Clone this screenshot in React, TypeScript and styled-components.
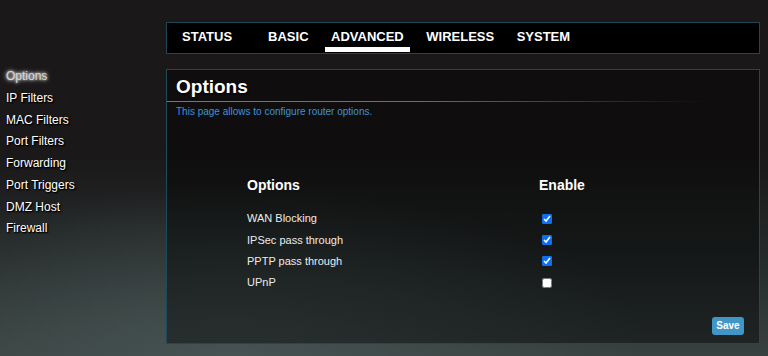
import React from "react";
import styled, { createGlobalStyle } from "styled-components";

const GlobalStyle = createGlobalStyle`
  html, body {
    margin: 0;
    padding: 0;
    min-height: 100%;
  }
  body {
    font-family: "Liberation Sans", Arial, sans-serif;
    color: #fff;
    background-color: #1a1819;
    background-image:
      radial-gradient(ellipse 420px 170px at 230px 356px, rgba(72, 86, 85, 0.85) 0%, rgba(72, 86, 85, 0) 100%),
      linear-gradient(to bottom, #1a1819 0px, #1a1819 150px, #262b2b 260px, #384140 356px);
    background-repeat: no-repeat;
    min-height: 356px;
  }
`;

const Page = styled.div`
  display: grid;
  grid-template-columns: 166px 594px;
  min-height: 356px;
  box-sizing: border-box;
`;

const Sidebar = styled.nav`
  display: flex;
  flex-direction: column;
  padding: 66px 0 0 6px;
`;

const SideLink = styled.div<{ $active?: boolean }>`
  font-size: 12px;
  line-height: 21.75px;
  color: ${(p) => (p.$active ? "#d6d6d6" : "#ffffff")};
  text-shadow: ${(p) =>
    p.$active ? "0 0 3px #fff, 0 0 5px rgba(255,255,255,0.8)" : "1px 1px 2px #000, 1px 1px 1px #000"};
  white-space: nowrap;
`;

const Main = styled.main`
  display: flex;
  flex-direction: column;
  padding-top: 22px;
`;

const TabBar = styled.div`
  display: flex;
  gap: 9.5px;
  height: 32px;
  box-sizing: border-box;
  background: #000;
  border: 1px solid #1c4757;
  padding-left: 8.5px;
`;

const Tab = styled.div<{ $active?: boolean; $spaced?: boolean }>`
  font-size: 13px;
  font-weight: bold;
  line-height: 21px;
  padding: 3px 6.5px 0;
  height: 29px;
  box-sizing: border-box;
  border-bottom: 5px solid ${(p) => (p.$active ? "#ffffff" : "transparent")};
  margin-right: ${(p) => (p.$spaced ? "13.5px" : "0")};
  color: #fff;
  text-shadow: 1px 1px 1px rgba(0, 0, 0, 0.8);
`;

const Panel = styled.section`
  margin-top: 15px;
  height: 275px;
  box-sizing: border-box;
  border: 1px solid #1d4a5a;
  background: rgba(0, 0, 0, 0.42);
  display: flex;
  flex-direction: column;
`;

const TitleBar = styled.h1`
  margin: 0 52px 0 0;
  padding: 5px 0 2px 9px;
  font-size: 19px;
  line-height: 24px;
  font-weight: bold;
  color: #fff;
  text-shadow: 1px 1px 2px #000;
  border-bottom: 1px solid;
  border-image: linear-gradient(to right, #3d88aa 0%, #3a80a0 45%, rgba(40, 80, 100, 0) 100%) 1;
`;

const Description = styled.p`
  margin: 4px 0 0;
  padding-left: 9px;
  font-size: 10px;
  line-height: 12px;
  color: #3f93d6;
`;

const OptionsGrid = styled.div`
  display: grid;
  grid-template-columns: 292px 120px;
  margin: 59px 0 0 80px;
`;

const HeaderCell = styled.div`
  font-size: 14px;
  font-weight: bold;
  line-height: 16px;
  margin-bottom: 15.3px;
  color: #fff;
`;

const LabelCell = styled.div`
  font-size: 11px;
  line-height: 21.25px;
  height: 21.25px;
  color: #ececec;
  white-space: nowrap;
`;

const CheckCell = styled.div`
  height: 21.25px;
  display: flex;
  align-items: center;
`;

const Check = styled.input.attrs({ type: "checkbox" })`
  width: 10px;
  height: 10px;
  margin: 0 0 0 2.5px;
  accent-color: #0b6ff0;
`;

const Footer = styled.div`
  margin-top: auto;
  display: flex;
  justify-content: flex-end;
  padding: 0 15px 8px 0;
`;

const SaveButton = styled.button`
  width: 32px;
  height: 18px;
  padding: 0;
  border: none;
  border-radius: 3px;
  background: #4096c7;
  color: #fff;
  font-family: "Liberation Sans", Arial, sans-serif;
  font-size: 10px;
  font-weight: bold;
  line-height: 18px;
  cursor: pointer;
`;

const sideItems = [
  "Options",
  "IP Filters",
  "MAC Filters",
  "Port Filters",
  "Forwarding",
  "Port Triggers",
  "DMZ Host",
  "Firewall",
];

const tabs = ["STATUS", "BASIC", "ADVANCED", "WIRELESS", "SYSTEM"];

const options: { label: string; enabled: boolean }[] = [
  { label: "WAN Blocking", enabled: true },
  { label: "IPSec pass through", enabled: true },
  { label: "PPTP pass through", enabled: true },
  { label: "UPnP", enabled: false },
];

export default function App() {
  return (
    <>
      <GlobalStyle />
      <Page>
        <Sidebar>
          {sideItems.map((item, i) => (
            <SideLink key={item} $active={i === 0}>
              {item}
            </SideLink>
          ))}
        </Sidebar>
        <Main>
          <TabBar>
            {tabs.map((t, i) => (
              <Tab key={t} $active={t === "ADVANCED"} $spaced={i === 0}>
                {t}
              </Tab>
            ))}
          </TabBar>
          <Panel>
            <TitleBar>Options</TitleBar>
            <Description>This page allows to configure router options.</Description>
            <OptionsGrid>
              <HeaderCell>Options</HeaderCell>
              <HeaderCell>Enable</HeaderCell>
              {options.map((o) => (
                <React.Fragment key={o.label}>
                  <LabelCell>{o.label}</LabelCell>
                  <CheckCell>
                    <Check defaultChecked={o.enabled} />
                  </CheckCell>
                </React.Fragment>
              ))}
            </OptionsGrid>
            <Footer>
              <SaveButton type="button">Save</SaveButton>
            </Footer>
          </Panel>
        </Main>
      </Page>
    </>
  );
}
